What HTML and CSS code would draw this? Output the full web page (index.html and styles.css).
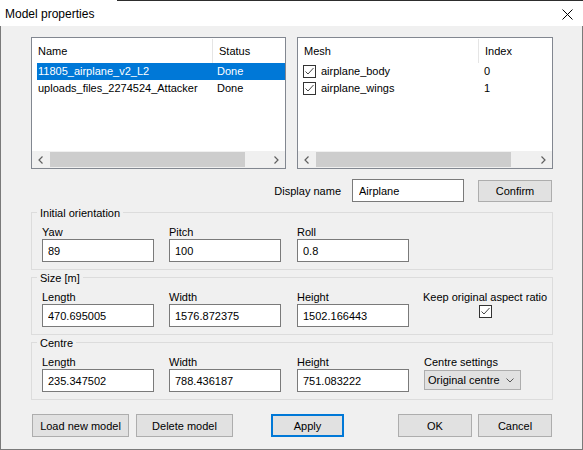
FILE: index.html
```html
<!DOCTYPE html>
<html lang="en">
<head>
    <meta charset="UTF-8">
    <meta name="viewport" content="width=device-width, initial-scale=1.0">
    <title>Model properties</title>
    <link rel="stylesheet" href="styles.css">
</head>
<body>
    <div class="window">
        <div class="titlebar">
            <span class="title">Model properties</span>
            <svg class="close" width="11" height="11" viewBox="0 0 11 11">
                <path d="M0.5 0.5 L10.5 10.5 M10.5 0.5 L0.5 10.5" stroke="#000" stroke-width="1" fill="none"/>
            </svg>
        </div>

        <div class="client">
            <div class="lists">
                <div class="listview models">
                    <div class="lv-header">
                        <div class="col col-first">Name</div>
                        <div class="col">Status</div>
                    </div>
                    <div class="lv-row selected">
                        <span class="cell-first">11805_airplane_v2_L2</span>
                        <span>Done</span>
                    </div>
                    <div class="lv-row">
                        <span class="cell-first">uploads_files_2274524_Attacker</span>
                        <span>Done</span>
                    </div>
                    <div class="hscroll">
                        <div class="sb-btn">
                            <svg width="5" height="8" viewBox="0 0 5 8"><polyline points="4.5,0.5 1,4 4.5,7.5" fill="none" stroke="#606060" stroke-width="1.2"/></svg>
                        </div>
                        <div class="sb-track"><div class="sb-thumb"></div></div>
                        <div class="sb-btn">
                            <svg width="5" height="8" viewBox="0 0 5 8"><polyline points="0.5,0.5 4,4 0.5,7.5" fill="none" stroke="#606060" stroke-width="1.2"/></svg>
                        </div>
                    </div>
                </div>

                <div class="listview meshes">
                    <div class="lv-header">
                        <div class="col col-first">Mesh</div>
                        <div class="col">Index</div>
                    </div>
                    <div class="lv-row">
                        <span class="cell-first cell-check">
                            <svg class="check" width="13" height="13" viewBox="0 0 13 13"><rect x="0.5" y="0.5" width="12" height="12" fill="#fff" stroke="#333"/><polyline points="2.5,6.5 5,9 10.5,3" fill="none" stroke="#444"/></svg>
                            airplane_body
                        </span>
                        <span>0</span>
                    </div>
                    <div class="lv-row">
                        <span class="cell-first cell-check">
                            <svg class="check" width="13" height="13" viewBox="0 0 13 13"><rect x="0.5" y="0.5" width="12" height="12" fill="#fff" stroke="#333"/><polyline points="2.5,6.5 5,9 10.5,3" fill="none" stroke="#444"/></svg>
                            airplane_wings
                        </span>
                        <span>1</span>
                    </div>
                    <div class="hscroll">
                        <div class="sb-btn">
                            <svg width="5" height="8" viewBox="0 0 5 8"><polyline points="4.5,0.5 1,4 4.5,7.5" fill="none" stroke="#606060" stroke-width="1.2"/></svg>
                        </div>
                        <div class="sb-track"><div class="sb-thumb"></div></div>
                        <div class="sb-btn">
                            <svg width="5" height="8" viewBox="0 0 5 8"><polyline points="0.5,0.5 4,4 0.5,7.5" fill="none" stroke="#606060" stroke-width="1.2"/></svg>
                        </div>
                    </div>
                </div>
            </div>

            <div class="display-row">
                <label>Display name</label>
                <input class="textbox display-name" type="text" value="Airplane">
                <button class="button confirm">Confirm</button>
            </div>

            <div class="group">
                <div class="group-title">Initial orientation</div>
                <div class="fields">
                    <div class="field"><label>Yaw</label><input class="textbox" type="text" value="89"></div>
                    <div class="field"><label>Pitch</label><input class="textbox" type="text" value="100"></div>
                    <div class="field"><label>Roll</label><input class="textbox" type="text" value="0.8"></div>
                </div>
            </div>

            <div class="group">
                <div class="group-title">Size [m]</div>
                <div class="fields">
                    <div class="field"><label>Length</label><input class="textbox" type="text" value="470.695005"></div>
                    <div class="field"><label>Width</label><input class="textbox" type="text" value="1576.872375"></div>
                    <div class="field"><label>Height</label><input class="textbox" type="text" value="1502.166443"></div>
                    <div class="field field-check">
                        <label>Keep original aspect ratio</label>
                        <svg class="check aspect" width="13" height="13" viewBox="0 0 13 13"><rect x="0.5" y="0.5" width="12" height="12" fill="#fff" stroke="#333"/><polyline points="2.5,6.5 5,9 10.5,3" fill="none" stroke="#444"/></svg>
                    </div>
                </div>
            </div>

            <div class="group">
                <div class="group-title">Centre</div>
                <div class="fields">
                    <div class="field"><label>Length</label><input class="textbox" type="text" value="235.347502"></div>
                    <div class="field"><label>Width</label><input class="textbox" type="text" value="788.436187"></div>
                    <div class="field"><label>Height</label><input class="textbox" type="text" value="751.083222"></div>
                    <div class="field">
                        <label>Centre settings</label>
                        <div class="combo">
                            <span>Original centre</span>
                            <svg width="8" height="5" viewBox="0 0 8 5"><polyline points="0.5,0.5 4,4 7.5,0.5" fill="none" stroke="#555" stroke-width="1"/></svg>
                        </div>
                    </div>
                </div>
            </div>

            <div class="actions">
                <button class="button wide">Load new model</button>
                <button class="button wide delete">Delete model</button>
                <button class="button apply">Apply</button>
                <button class="button ok">OK</button>
                <button class="button cancel">Cancel</button>
            </div>
        </div>
    </div>
</body>
</html>
```

FILE: styles.css
```css
body {
    margin: 0;
    background-color: #f0f0f0;
    font-family: "Liberation Sans", Arial, sans-serif;
    font-size: 11px;
    color: #000;
}

.window {
    width: 583px;
    height: 450px;
}

.titlebar {
    box-sizing: border-box;
    height: 26px;
    display: flex;
    align-items: center;
    padding: 1px 10px 0 5px;
    background: linear-gradient(to right, #fff 117px, #2d2d2d 117px) top left / 100% 1px no-repeat, #fff;
}
.title {
    font-size: 12px;
}
.close {
    margin-left: auto;
    margin-top: 2px;
    display: block;
}

.client {
    box-sizing: border-box;
    height: 424px;
    border: 1px solid #7a7a7a;
    border-top: none;
    padding: 11px 29px 0 30px;
}

/* list views */
.lists {
    display: flex;
    gap: 11px;
}
.listview {
    box-sizing: border-box;
    height: 132px;
    border: 1px solid #828790;
    background-color: #fff;
    display: flex;
    flex-direction: column;
}
.models {
    width: 255px;
}
.meshes {
    width: 256px;
}
.lv-header {
    display: flex;
    height: 25px;
}
.lv-header .col {
    box-sizing: border-box;
    margin-top: 1px;
    line-height: 24px;
    padding-left: 6px;
}
.lv-header .col-first {
    width: 181px;
    border-right: 1px solid #e5e5e5;
}
.lv-row {
    display: flex;
    height: 17px;
    line-height: 17px;
    margin-left: 5px;
}
.lv-row .cell-first {
    box-sizing: border-box;
    width: 180px;
    padding-left: 1px;
    white-space: nowrap;
}
.lv-row.selected {
    background-color: #0078d7;
    color: #fff;
}
.cell-check {
    display: flex;
    align-items: center;
    gap: 5px;
}
.lv-row .cell-check {
    padding-left: 0;
    width: 181px;
}
.check {
    display: block;
    flex: none;
}

.hscroll {
    margin-top: auto;
    height: 17px;
    display: flex;
    background-color: #f0f0f0;
}
.sb-btn {
    width: 17px;
    display: flex;
    align-items: center;
    justify-content: center;
}
.sb-track {
    flex: 1;
    display: flex;
    align-items: center;
    padding-left: 1px;
}
.sb-thumb {
    width: 195px;
    height: 15px;
    background-color: #cdcdcd;
}

/* controls */
.textbox {
    box-sizing: border-box;
    width: 112px;
    height: 23px;
    margin: 0;
    border: 1px solid #7a7a7a;
    background-color: #fff;
    padding: 0 0 0 5px;
    font: inherit;
    color: #000;
    outline: none;
}
.button {
    box-sizing: border-box;
    height: 22px;
    margin: 0;
    padding: 0;
    border: 1px solid #adadad;
    background-color: #e1e1e1;
    font: inherit;
    color: #000;
}

.display-row {
    display: flex;
    align-items: center;
    justify-content: flex-end;
    margin-top: 10px;
    padding-right: 1px;
}
.display-row label {
    margin-right: 11px;
}
.display-name {
    width: 112px;
    padding-left: 6px;
    margin-right: 14px;
}
.confirm {
    width: 74px;
}

/* group boxes */
.group {
    border: 1px solid #dcdcdc;
    margin-top: 10px;
    padding: 0 0 7px 10px;
}
.group + .group {
    margin-top: 7px;
}
.group-title {
    width: fit-content;
    margin: -7px 0 5px -5px;
    padding: 0 3px;
    line-height: 14px;
    background-color: #f0f0f0;
}
.fields {
    display: grid;
    grid-template-columns: 127px 128px 127px auto;
}
.field label {
    display: block;
    line-height: 14px;
    white-space: nowrap;
}
.field-check {
    display: flex;
    flex-direction: column;
    align-items: center;
    width: fit-content;
    margin-left: -1px;
}
.aspect {
    margin-top: 1px;
}
.combo {
    box-sizing: border-box;
    width: 97px;
    height: 20px;
    margin-top: 1px;
    border: 1px solid #adadad;
    background-color: #e1e1e1;
    display: flex;
    align-items: center;
    justify-content: space-between;
    padding: 0 6px 0 3px;
}

/* bottom buttons */
.actions {
    display: flex;
    margin-top: 14px;
    padding: 0 1px;
}
.actions .button {
    height: 23px;
}
.wide {
    width: 97px;
}
.delete {
    margin-left: 7px;
}
.apply {
    width: 73px;
    margin-left: 38px;
    border: 2px solid #0078d7;
}
.ok {
    width: 74px;
    margin-left: auto;
}
.cancel {
    width: 74px;
    margin-left: 6px;
}
```
